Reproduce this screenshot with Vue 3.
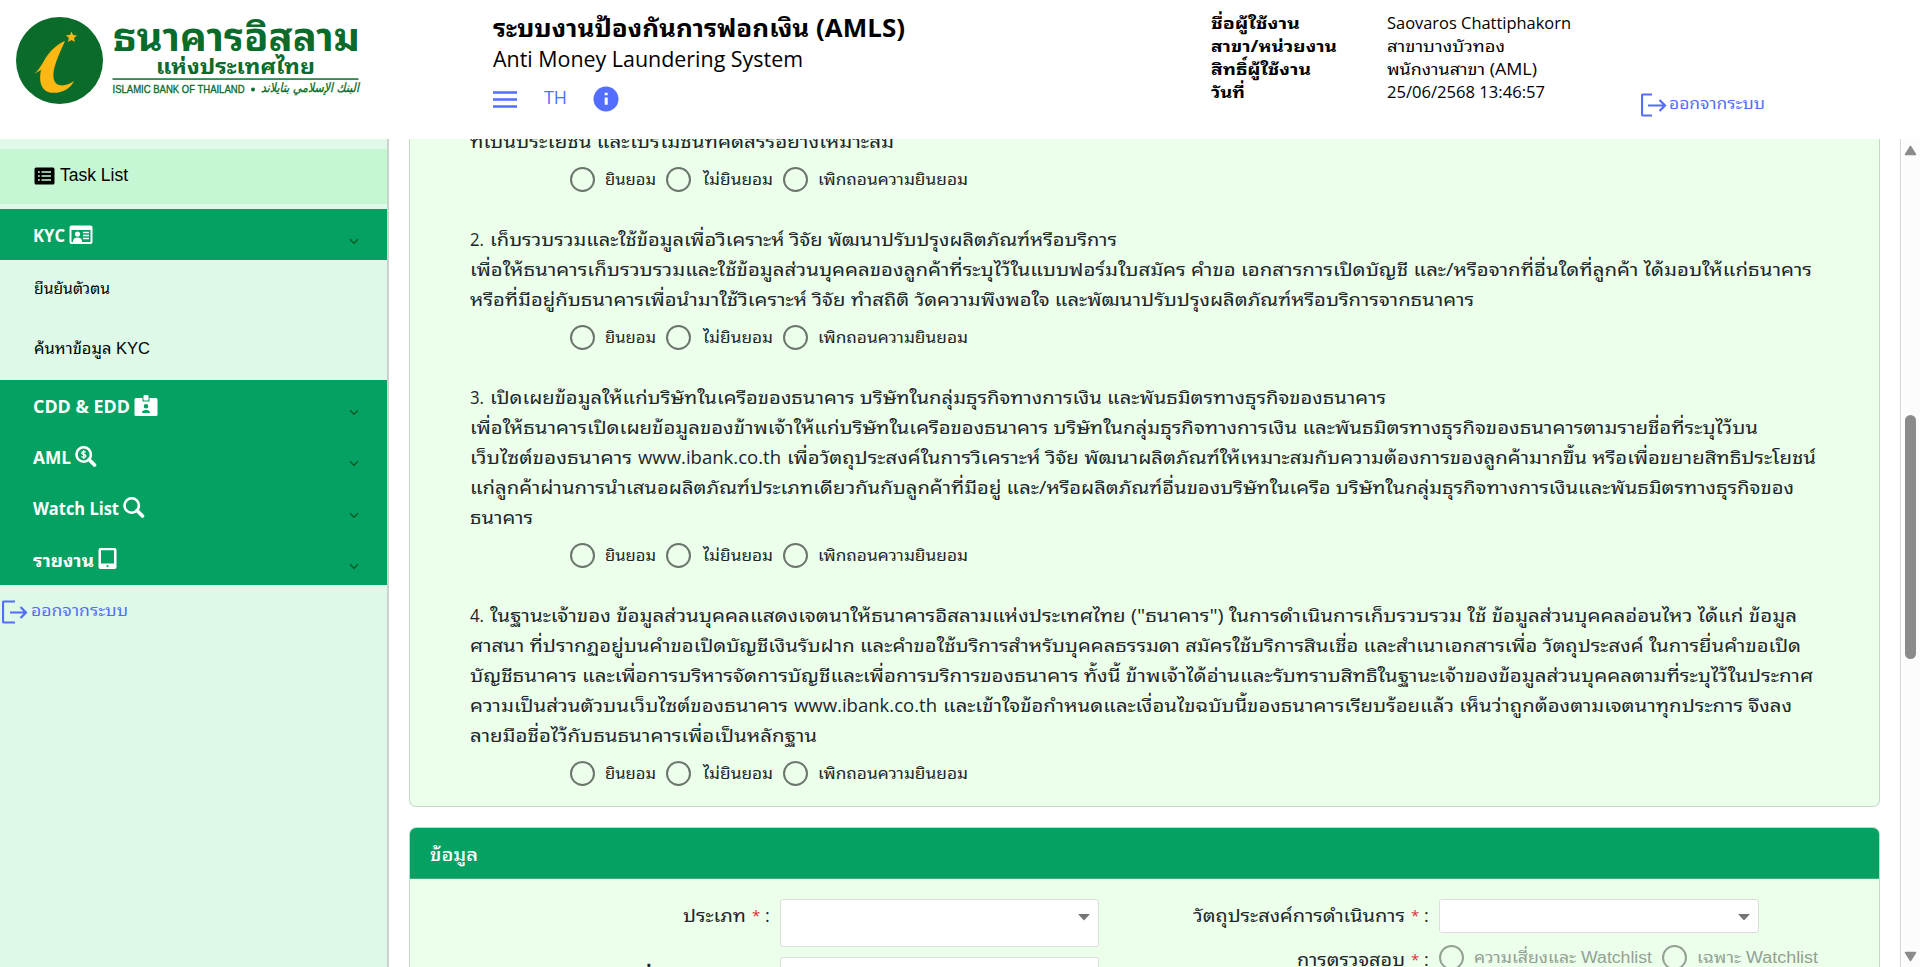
<script setup>
import { ref } from 'vue'

// Stretches a single line of text to a given width in pixels.
const vFit = {
  mounted(el, { value }) {
    const natural = el.getBoundingClientRect().width
    el.style.width = value + 'px'
    el.style.transform = `scaleX(${value / natural})`
  },
}

const user = [
  { label: 'ชื่อผู้ใช้งาน', lw: 89, value: 'Saovaros Chattiphakorn', vw: 184 },
  { label: 'สาขา/หน่วยงาน', lw: 126, value: 'สาขาบางบัวทอง', vw: 118 },
  { label: 'สิทธิ์ผู้ใช้งาน', lw: 100, value: 'พนักงานสาขา (AML)', vw: 150 },
  { label: 'วันที่', lw: 34, value: '25/06/2568 13:46:57', vw: 158 },
]

const menu = [
  { label: 'CDD & EDD', w: 97, icon: 'badge' },
  { label: 'AML', w: 38, icon: 'dollar' },
  { label: 'Watch List', w: 86, icon: 'search' },
  { label: 'รายงาน', w: 61, icon: 'tablet' },
]

// Each consent is a list of lines, each line a list of [text, width] runs.
const consents = [
  [[['ที่เป็นประโยชน์ และโปรโมชั่นที่คัดสรรอย่างเหมาะสม', 424]]],
  [
    [['2.', 14], ['เก็บรวบรวมและใช้ข้อมูลเพื่อวิเคราะห์ วิจัย พัฒนาปรับปรุงผลิตภัณฑ์หรือบริการ', 627]],
    [['เพื่อให้ธนาคารเก็บรวบรวมและใช้ข้อมูลส่วนบุคคลของลูกค้าที่ระบุไว้ในแบบฟอร์มใบสมัคร คำขอ เอกสารการเปิดบัญชี และ/หรือจากที่อื่นใดที่ลูกค้า ได้มอบให้แก่ธนาคาร', 1342]],
    [['หรือที่มีอยู่กับธนาคารเพื่อนำมาใช้วิเคราะห์ วิจัย ทำสถิติ วัดความพึงพอใจ และพัฒนาปรับปรุงผลิตภัณฑ์หรือบริการจากธนาคาร', 1004]],
  ],
  [
    [['3.', 14], ['เปิดเผยข้อมูลให้แก่บริษัทในเครือของธนาคาร บริษัทในกลุ่มธุรกิจทางการเงิน และพันธมิตรทางธุรกิจของธนาคาร', 896]],
    [['เพื่อให้ธนาคารเปิดเผยข้อมูลของข้าพเจ้าให้แก่บริษัทในเครือของธนาคาร บริษัทในกลุ่มธุรกิจทางการเงิน และพันธมิตรทางธุรกิจของธนาคารตามรายชื่อที่ระบุไว้บน', 1288]],
    [['เว็บไซต์ของธนาคาร', 162], ['www.ibank.co.th', 143], ['เพื่อวัตถุประสงค์ในการวิเคราะห์ วิจัย พัฒนาผลิตภัณฑ์ให้เหมาะสมกับความต้องการของลูกค้ามากขึ้น หรือเพื่อขยายสิทธิประโยชน์', 1029]],
    [['แก่ลูกค้าผ่านการนำเสนอผลิตภัณฑ์ประเภทเดียวกันกับลูกค้าที่มีอยู่ และ/หรือผลิตภัณฑ์อื่นของบริษัทในเครือ บริษัทในกลุ่มธุรกิจทางการเงินและพันธมิตรทางธุรกิจของ', 1324]],
    [['ธนาคาร', 63]],
  ],
  [
    [['4.', 14], ['ในฐานะเจ้าของ ข้อมูลส่วนบุคคลแสดงเจตนาให้ธนาคารอิสลามแห่งประเทศไทย ("ธนาคาร") ในการดำเนินการเก็บรวบรวม ใช้ ข้อมูลส่วนบุคคลอ่อนไหว ได้แก่ ข้อมูล', 1307]],
    [['ศาสนา ที่ปรากฏอยู่บนคำขอเปิดบัญชีเงินรับฝาก และคำขอใช้บริการสำหรับบุคคลธรรมดา สมัครใช้บริการสินเชื่อ และสำเนาเอกสารเพื่อ วัตถุประสงค์ ในการยื่นคำขอเปิด', 1331]],
    [['บัญชีธนาคาร และเพื่อการบริหารจัดการบัญชีและเพื่อการบริการของธนาคาร ทั้งนี้ ข้าพเจ้าได้อ่านและรับทราบสิทธิในฐานะเจ้าของข้อมูลส่วนบุคคลตามที่ระบุไว้ในประกาศ', 1343]],
    [['ความเป็นส่วนตัวบนเว็บไซต์ของธนาคาร', 318], ['www.ibank.co.th', 143], ['และเข้าใจข้อกำหนดและเงื่อนไขฉบับนี้ของธนาคารเรียบร้อยแล้ว เห็นว่าถูกต้องตามเจตนาทุกประการ จึงลง', 849]],
    [['ลายมือชื่อไว้กับธนธนาคารเพื่อเป็นหลักฐาน', 347]],
  ],
]

const choices = [
  ['ยินยอม', 51],
  ['ไม่ยินยอม', 70],
  ['เพิกถอนความยินยอม', 150],
]
const answers = ref(['', '', '', ''])
</script>

<template>
  <div class="page">
    <header class="header">
      <svg class="logo" width="400" height="139" viewBox="0 0 400 139">
        <circle cx="59.500" cy="60.500" r="43.500" fill="#0a6b2b" />
        <path fill="#fdb813" d="M65 41 C57 44 50 51 45 59 C41 66 38 71 34 74 L41 70 C39 79 40 89 48 92 C58 95 70 90 74 81 C67 86 57 88 54 80 C51 70 59 55 65 41Z" />
        <path fill="#fdb813" d="M71.500 31.500 l1.500 3.500 4 .4 -3 2.700 1 4 -3.500 -2.100 -3.600 2 1 -4 -3 -2.700 4.100 -.3z" />
        <g fill="#0a6b2b">
          <text class="logo-th" x="113" y="51" font-size="39" textLength="247" lengthAdjust="spacingAndGlyphs">ธนาคารอิสลาม</text>
          <text class="logo-th" x="156" y="73.500" font-size="20" textLength="159" lengthAdjust="spacingAndGlyphs">แห่งประเทศไทย</text>
          <rect x="112.500" y="78.300" width="246" height="1.500" />
          <text class="logo-en" x="112.500" y="92.500" font-size="11.500" textLength="132" lengthAdjust="spacingAndGlyphs">ISLAMIC BANK OF THAILAND</text>
          <circle cx="253" cy="89.500" r="2" />
          <text class="logo-ar" x="261" y="92" font-size="13" textLength="98" lengthAdjust="spacingAndGlyphs">البنك الإسلامي بتايلاند</text>
        </g>
      </svg>

      <div class="titles">
        <h1><span v-fit="412" class="fit">ระบบงานป้องกันการฟอกเงิน (AMLS)</span></h1>
        <h2><span v-fit="310" class="fit">Anti Money Laundering System</span></h2>
        <div class="tools">
          <svg width="24" height="17" viewBox="0 0 24 17"><path d="M0 1.500h24M0 8.500h24M0 15.500h24" stroke="#536dfe" stroke-width="2.300" /></svg>
          <span class="lang"><span v-fit="23" class="fit">TH</span></span>
          <svg width="26" height="26" viewBox="0 0 26 26"><circle cx="13" cy="13" r="12.500" fill="#536dfe" /><path d="M11.700 6.700h3v2.600h-3zM11.700 11.500h3v7.300h-3z" fill="#fff" /></svg>
        </div>
      </div>

      <dl class="user">
        <template v-for="u in user" :key="u.label">
          <dt><span v-fit="u.lw" class="fit">{{ u.label }}</span></dt>
          <dd><span v-fit="u.vw" class="fit">{{ u.value }}</span></dd>
        </template>
      </dl>

      <a class="logout top">
        <svg width="26" height="24" viewBox="0 0 26 24" fill="none" stroke="#536dfe" stroke-width="2.200"><path d="M11 1.500H2q-1 0-1 1v19q0 1 1 1h9M7 12.500h17M18.500 7l5.500 5.500-5.500 5.500" /></svg>
        <span v-fit="96" class="fit">ออกจากระบบ</span>
      </a>
    </header>

    <div class="body">
      <aside class="side">
        <div class="task">
          <svg width="21" height="18" viewBox="0 0 21 18"><rect x=".5" y=".5" width="20" height="17" rx="1.500" /><path stroke="#c6f7d4" stroke-width="1.700" d="M4 5h1.800M4 9h1.800M4 13h1.800M7.500 5H17M7.500 9H17M7.500 13H17" /></svg>
          <span v-fit="68" class="fit">Task List</span>
        </div>
        <div class="group first">
          <span v-fit="32" class="fit">KYC</span>
          <svg class="gi" width="24" height="21" viewBox="0 0 24 21">
            <path fill="#fff" fill-rule="evenodd" d="M2.500 1.500h19a2 2 0 0 1 2 2V18a2 2 0 0 1-2 2h-19a2 2 0 0 1-2-2V3.500a2 2 0 0 1 2-2zM2.500 6v12h19V6z" />
            <circle cx="8.500" cy="10" r="2.600" fill="#fff" /><path fill="#fff" d="M4 18c0-3.500 2-4.500 4.500-4.500S13 14.500 13 18z" />
            <path stroke="#fff" stroke-width="1.500" d="M14 8.500h6M14 11.500h6M14 14.500h6" />
          </svg>
          <svg class="chev" width="10" height="7" viewBox="0 0 10 7"><path d="M1 1.300l4 4 4-4" fill="none" stroke="#0b5a24" stroke-width="1.400" /></svg>
        </div>
        <div class="sub"><span v-fit="76" class="fit">ยืนยันตัวตน</span></div>
        <div class="sub"><span v-fit="116" class="fit">ค้นหาข้อมูล KYC</span></div>
        <div v-for="m in menu" :key="m.label" class="group">
          <span v-fit="m.w" class="fit">{{ m.label }}</span>
          <svg v-if="m.icon === 'badge'" class="gi" width="24" height="21" viewBox="0 0 24 21">
            <path fill="#fff" fill-rule="evenodd" d="M2 3h6.500v3.500h7V3H22a1.500 1.500 0 0 1 1.500 1.500v15A1.500 1.500 0 0 1 22 21H2a1.500 1.500 0 0 1-1.500-1.500v-15A1.500 1.500 0 0 1 2 3zM12 9a2.300 2.300 0 1 0 0 4.600A2.300 2.300 0 0 0 12 9zM8 18h8c0-2.200-1.300-3-4-3s-4 .8-4 3z" />
            <rect x="9.500" y="0" width="5" height="5.500" rx="1" fill="#fff" />
          </svg>
          <svg v-else-if="m.icon === 'tablet'" class="gi" width="19" height="21" viewBox="0 0 19 21">
            <path fill="#fff" fill-rule="evenodd" d="M2.500 0h14a2 2 0 0 1 2 2v17a2 2 0 0 1-2 2h-14a2 2 0 0 1-2-2V2a2 2 0 0 1 2-2zM3 2.300v13.200h13V2.300zM9.500 17a1.100 1.100 0 1 0 0 2.200 1.100 1.100 0 0 0 0-2.200z" />
          </svg>
          <svg v-else class="gi" width="22" height="21" viewBox="0 0 22 21">
            <circle cx="8.700" cy="8.500" r="7.200" fill="none" stroke="#fff" stroke-width="2.600" />
            <path d="M14 13.500l5.500 5.500" stroke="#fff" stroke-width="3.600" stroke-linecap="round" />
            <path v-if="m.icon === 'dollar'" d="M10.700 6.300c-1.200-1-4-.9-4 .7 0 2 4.200 1 4.200 3 0 1.700-3 1.700-4.400.6M8.700 4v9" fill="none" stroke="#fff" stroke-width="1.300" />
          </svg>
          <svg class="chev" width="10" height="7" viewBox="0 0 10 7"><path d="M1 1.300l4 4 4-4" fill="none" stroke="#0b5a24" stroke-width="1.400" /></svg>
        </div>
        <a class="logout">
          <svg width="26" height="24" viewBox="0 0 26 24" fill="none" stroke="#536dfe" stroke-width="2.200"><path d="M13 1.500H2q-1 0-1 1v19q0 1 1 1h11M8 12.500h16M18.500 7l5.500 5.500-5.500 5.500" /></svg>
          <span v-fit="97" class="fit">ออกจากระบบ</span>
        </a>
      </aside>

      <main class="main">
        <section class="card consent">
          <div v-for="(c, i) in consents" :key="i" class="item">
            <p v-for="(line, n) in c" :key="n">
              <span v-for="run in line" :key="run[0]" v-fit="run[1]" class="fit">{{ run[0] }}</span>
            </p>
            <div class="radios">
              <label v-for="o in choices" :key="o[0]">
                <input v-model="answers[i]" type="radio" :name="'consent' + i" :value="o[0]" />
                <span v-fit="o[1]" class="fit">{{ o[0] }}</span>
              </label>
            </div>
          </div>
        </section>

        <section class="card info">
          <div class="card-head"><span v-fit="48" class="fit">ข้อมูล</span></div>
          <div class="form">
            <div class="col left">
              <div class="field">
                <div class="name"><span v-fit="63" class="fit">ประเภท</span><i>*</i><b>:</b></div>
                <div class="select tall"><svg width="12" height="7" viewBox="0 0 12 7"><path d="M0 0h12L6 6.500z" fill="#757575" /></svg></div>
              </div>
              <div class="field">
                <div class="name low"><span v-fit="112" class="fit">ชื่อลูกค้า</span><i>*</i><b>:</b></div>
                <div class="select tall"></div>
              </div>
            </div>
            <div class="col right">
              <div class="field">
                <div class="name"><span v-fit="212" class="fit">วัตถุประสงค์การดำเนินการ</span><i>*</i><b>:</b></div>
                <div class="select"><svg width="12" height="7" viewBox="0 0 12 7"><path d="M0 0h12L6 6.500z" fill="#757575" /></svg></div>
              </div>
              <div class="field">
                <div class="name check"><span v-fit="108" class="fit">การตรวจสอบ</span><i>*</i><b>:</b></div>
                <div class="radios off">
                  <label><input type="radio" name="check" disabled /><span v-fit="178" class="fit">ความเสี่ยงและ Watchlist</span></label>
                  <label><input type="radio" name="check" disabled /><span v-fit="121" class="fit">เฉพาะ Watchlist</span></label>
                </div>
              </div>
            </div>
          </div>
        </section>
      </main>

      <div class="scroll">
        <svg width="13" height="11" viewBox="0 0 13 11"><path d="M6.500 1.500L11.500 9.500h-10z" fill="#8b8b8b" stroke="#8b8b8b" stroke-width="1.500" stroke-linejoin="round" /></svg>
        <div class="thumb"></div>
        <svg width="13" height="11" viewBox="0 0 13 11"><path d="M6.500 9.500L1.500 1.500h10z" fill="#8b8b8b" stroke="#8b8b8b" stroke-width="1.500" stroke-linejoin="round" /></svg>
      </div>
    </div>
  </div>
</template>

<style>
body { margin: 0; overflow: hidden; background: #fff; }
</style>

<style scoped>
.page, .page * { box-sizing: border-box; }
.page { width: 1920px; height: 967px; display: flex; flex-direction: column; overflow: hidden; background: #fff; font-family: "Open Sans", "Noto Sans Thai Looped", Loma, Waree, "Noto Sans Thai", sans-serif; color: #212529; }
.fit { display: inline-block; white-space: nowrap; transform-origin: 0 50%; flex: none; }
svg { flex: none; display: block; }
.header { height: 139px; flex: none; display: flex; color: #000; }
.logo-th { font-family: "Noto Sans Thai Looped", Loma, Waree, "Noto Sans Thai", "Liberation Sans", sans-serif; font-weight: 700; }
.logo-en { font-family: "Liberation Sans", sans-serif; stroke: #0a6b2b; stroke-width: .35px; }
.logo-ar { font-family: "DejaVu Sans", sans-serif; font-style: italic; stroke: #0a6b2b; stroke-width: .3px; }
.titles { margin-left: 93px; width: 717px; padding-top: 12px; }
h1, h2 { margin: 0; height: 32px; line-height: 32px; white-space: nowrap; }
h1 { font-size: 24.500px; font-weight: 700; }
h2 { font-size: 21.500px; font-weight: 400; line-height: 30px; }
.tools { display: flex; align-items: center; height: 46px; margin-top: 0; }
.lang { color: #536dfe; font-size: 18px; margin: 0 26px 0 27px; line-height: 22px; height: 26px; }
.user { margin: 12px 0 0 1px; width: 429px; display: grid; grid-template-columns: 176px 1fr; grid-auto-rows: 23px; font-size: 16px; line-height: 22px; }
.user dt { font-weight: 700; white-space: nowrap; }
.user dd { margin: 0; white-space: nowrap; }
.logout { display: flex; align-items: center; gap: 3px; color: #536dfe; font-size: 16.500px; line-height: 20px; height: 24px; margin: 15px 0 0 2px; }
.logout .fit { margin-top: -4px; }
.logout.top { margin: 93px 0 0 1px; gap: 2px; }
.body { flex: 1; min-height: 0; display: flex; }
.side { width: 389px; border-right: 2px solid #ccd3ce; background: #dff9e8; flex: none; }
.task { margin-top: 10px; height: 55px; background: #c6f7d4; padding: 0 0 2px 34px; display: flex; align-items: center; gap: 5px; font-family: "Liberation Sans", sans-serif; font-size: 17.500px; color: #000; }
.group { height: 51.250px; background: #04a162; color: #fff; font-weight: 700; font-size: 17px; padding: 1px 0 0 32.500px; display: flex; align-items: center; gap: 4px; }
.group.first { margin-top: 5px; height: 51px; }
.gi { margin-top: -2px; }
.chev { margin: 13px 28px 0 auto; }
.sub { height: 60px; padding: 0 0 6px 34px; display: flex; align-items: center; font-family: "Liberation Sans", "Noto Sans Thai Looped", Loma, Waree, "Noto Sans Thai", sans-serif; font-size: 16px; color: #000; }
.main { flex: 1; padding-left: 20px; padding-right: 20px; overflow: hidden; }
.card { border: 1px solid #c4d9c9; background: #ebffeb; border-radius: 7px; }
.consent { border-top: 0; border-radius: 0 0 7px 7px; margin-top: -11px; height: 679px; padding-left: 60px; font-size: 18px; }
.item p { margin: 0; height: 30px; line-height: 26px; white-space: nowrap; display: flex; gap: 6px; }
.item { margin-bottom: 24px; }
.radios { height: 44px; padding: 0 0 1px 100px; display: flex; align-items: center; gap: 10px; font-size: 16px; }
.radios label { display: flex; align-items: center; gap: 10px; line-height: 24px; }
.item .radios .fit { margin-top: -1px; }
.item .radios label:nth-child(2) { gap: 12px; }
.radios input { appearance: none; margin: 0; width: 25px; height: 25px; border: 2px solid #6b756b; border-radius: 50%; }
.radios input:checked { background: #536dfe; }
.info { margin-top: 20px; height: 300px; overflow: hidden; }
.card-head { height: 51px; background: #04a162; border-bottom: 1px solid #3fae7f; color: #fff; font-weight: 500; font-size: 17px; padding: 1px 0 0 20px; display: flex; align-items: center; }
.form { display: flex; padding-top: 20px; font-size: 18px; }
.col { display: flex; flex-direction: column; gap: 10px; }
.left { width: 690px; }
.field { display: flex; gap: 11px; }
.name { width: 360px; display: flex; justify-content: flex-end; line-height: 32px; white-space: nowrap; }
.left .name { width: 359px; }
.name.low { padding-top: 3px; }
.name.check { padding-top: 3px; }
.name i { color: #e02b3c; font-style: normal; font-size: 15px; margin-left: 6px; width: 8px; }
.name b { font-weight: 400; margin-left: 5px; width: 4px; }
.select { width: 320px; height: 34px; background: #fff; border: 1px solid #dcdcdc; border-radius: 3px; display: flex; justify-content: flex-end; padding: 14px 8px 0 0; }
.select.tall { height: 48px; width: 319px; }
.right .name { width: 328px; }
.right .field:nth-child(2) { margin-top: -3px; }
.radios.off { height: 32px; padding: 3px 0 0; font-family: "Liberation Sans", "Noto Sans Thai Looped", Loma, Waree, "Noto Sans Thai", sans-serif; color: #93a093; }
.radios.off input { border-color: #93a093; }
.scroll { width: 20px; border-left: 1px solid #d5d5d5; background: #fcfcfc; display: flex; flex-direction: column; align-items: center; padding: 6px 0 5px; flex: none; }
.thumb { width: 11px; height: 244px; border-radius: 6px; background: #8b8b8b; margin: 259px 0 auto; }
</style>
